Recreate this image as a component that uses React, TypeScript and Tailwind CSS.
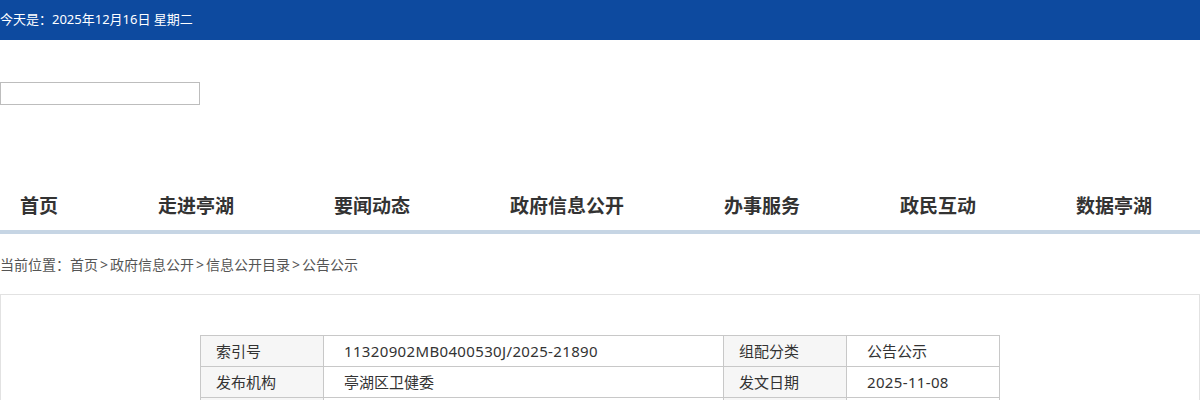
import React from "react";

const navItems = ["首页", "走进亭湖", "要闻动态", "政府信息公开", "办事服务", "政民互动", "数据亭湖"];

const Sep = () => <span className="px-[2px]">&gt;</span>;

export default function App() {
  return (
    <div className="w-[1200px] bg-white text-[#333]" style={{ fontFamily: '"Noto Sans", "Noto Sans CJK SC", sans-serif' }}>
      <div className="h-10 bg-[#0d4a9f] flex items-center text-white text-[13px]">今天是：2025年12月16日 星期二</div>
      <div className="pt-[42px]">
        <input className="block w-[200px] h-[23px] border border-[#bdbdbd] outline-none" />
      </div>
      <div className="h-[125px] flex items-end">
        <ul className="flex h-[48px] items-center pl-5 gap-[100px]">
          {navItems.map((n) => (
            <li key={n} className="text-[19px] font-bold text-[#333]">{n}</li>
          ))}
        </ul>
      </div>
      <div className="h-1 bg-[#c6d5e4]" />
      <div className="h-[60px] flex items-center text-[14px] text-[#555]">
        <span>当前位置：首页</span><Sep /><span>政府信息公开</span><Sep /><span>信息公开目录</span><Sep /><span>公告公示</span>
      </div>
      <div className="border border-[#e2e2e2] pt-10 pb-10">
        <table className="mx-auto w-[800px] border-collapse text-[15px] text-[#333]">
          <tbody>
            <tr className="h-[31px]">
              <td className="w-[123px] border border-[#c8c8c8] bg-[#f6f6f6] pl-[15px]">索引号</td>
              <td className="w-[400px] border border-[#c8c8c8] pl-5 tracking-[0.35px]">11320902MB0400530J/2025-21890</td>
              <td className="w-[123px] border border-[#c8c8c8] bg-[#f6f6f6] pl-[15px]">组配分类</td>
              <td className="border border-[#c8c8c8] pl-5">公告公示</td>
            </tr>
            <tr className="h-[31px]">
              <td className="border border-[#c8c8c8] bg-[#f6f6f6] pl-[15px]">发布机构</td>
              <td className="border border-[#c8c8c8] pl-5">亭湖区卫健委</td>
              <td className="border border-[#c8c8c8] bg-[#f6f6f6] pl-[15px]">发文日期</td>
              <td className="border border-[#c8c8c8] pl-5 tracking-[0.35px]">2025-11-08</td>
            </tr>
            <tr className="h-[31px]">
              <td className="border border-[#c8c8c8] bg-[#f6f6f6] pl-[15px]">&nbsp;</td>
              <td className="border border-[#c8c8c8] pl-5"></td>
              <td className="border border-[#c8c8c8] bg-[#f6f6f6] pl-[15px]"></td>
              <td className="border border-[#c8c8c8] pl-5"></td>
            </tr>
          </tbody>
        </table>
      </div>
    </div>
  );
}
